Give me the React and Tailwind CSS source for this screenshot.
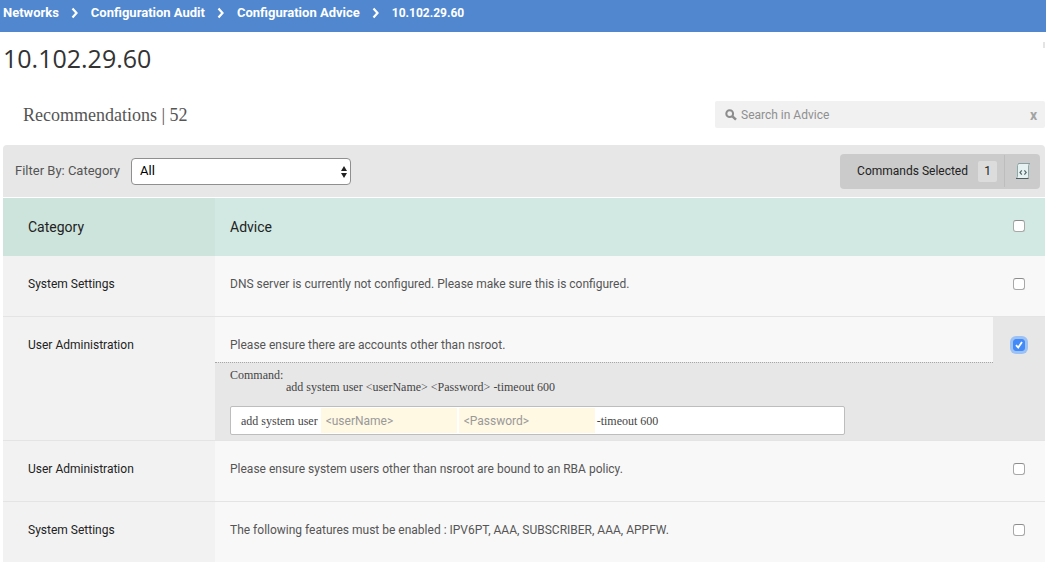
import { useState } from "react";
import clsx from "clsx";

const crumbs = ["Networks", "Configuration Audit", "Configuration Advice"];

const adviceRows = [
	{
		id: 1,
		category: "System Settings",
		advice:
			"DNS server is currently not configured. Please make sure this is configured.",
	},
	{
		id: 2,
		category: "User Administration",
		advice: "Please ensure there are accounts other than nsroot.",
		command: {
			prefix: "add system user",
			params: ["<userName>", "<Password>"],
			suffix: "-timeout 600",
		},
	},
	{
		id: 3,
		category: "User Administration",
		advice:
			"Please ensure system users other than nsroot are bound to an RBA policy.",
	},
	{
		id: 4,
		category: "System Settings",
		advice:
			"The following features must be enabled : IPV6PT, AAA, SUBSCRIBER, AAA, APPFW.",
	},
];

function Chevron() {
	return (
		<svg
			viewBox="0 0 8 12"
			className="mx-3 h-3 w-2"
			fill="none"
			stroke="currentColor"
			strokeWidth="2.2"
			aria-hidden="true"
		>
			<path d="M1.5 1.5 5.5 6 1.5 10.5" />
		</svg>
	);
}

function SearchIcon() {
	return (
		<svg
			viewBox="0 0 12 12"
			className="h-3 w-3 shrink-0 text-[#8c8c8c]"
			fill="none"
			stroke="currentColor"
			aria-hidden="true"
		>
			<circle cx="4.7" cy="4.7" r="3.4" strokeWidth="2" />
			<path d="M7.4 7.4 11 10.6" strokeWidth="2.6" />
		</svg>
	);
}

function ScriptIcon() {
	return (
		<svg viewBox="0 0 16 18" className="h-[18px] w-4" aria-hidden="true">
			<path
				d="M3.5 1.5H14.5L13.5 3.5V14.5L13 16.5H1.5L2.5 14.5V3.5Z"
				fill="#e6f1f1"
				stroke="#8fa9a9"
			/>
			<path d="M3.5 1.5H15" stroke="#8a9f9f" />
			<path d="M1 16.5H13.5" stroke="#4f5f5f" />
			<path
				d="M6.8 8.4 5 10.5 6.8 12.6M9.4 8.4 11.2 10.5 9.4 12.6"
				fill="none"
				stroke="#55696b"
				strokeWidth="1.2"
			/>
		</svg>
	);
}

function Checkbox({ label, checked, onChange }) {
	return (
		<span className="grid place-items-center">
			<input
				type="checkbox"
				aria-label={label}
				checked={checked}
				onChange={onChange}
				className="col-start-1 row-start-1 h-3 w-3 appearance-none rounded-[3px] border border-[#a8a8a8] border-t-[#8c8c8c] bg-white checked:border-[#4389f8] checked:bg-[#4389f8] checked:ring-3 checked:ring-[#9cc2f5]"
			/>
			{checked && (
				<svg
					viewBox="0 0 12 12"
					className="pointer-events-none col-start-1 row-start-1 h-3 w-3"
					fill="none"
					stroke="white"
					strokeWidth="1.8"
					aria-hidden="true"
				>
					<path d="M3 6.2 5.2 8.6 9 3" />
				</svg>
			)}
		</span>
	);
}

function CommandPanel({ command }) {
	return (
		<div className="border-t border-dotted border-[#a6a6a6] bg-[#e7e7e7] pt-1.5 pr-4 pb-[5px] pl-[15px] font-['Liberation_Serif',serif] text-xs text-[#444]">
			<div className="leading-3">Command:</div>
			<div className="pl-14 leading-3">
				{command.prefix} {command.params.join(" ")} {command.suffix}
			</div>
			<div className="mt-[13px] flex h-[29px] max-w-[615px] items-center rounded-xs border border-[#bdbdbd] bg-white pl-2.5">
				<span className="mr-[3px]">{command.prefix}</span>
				{command.params.map((param) => (
					<input
						key={param}
						aria-label={param}
						placeholder={param}
						className="mr-0.5 h-[25px] w-[136px] min-w-0 bg-[#fff8e3] px-[5px] font-['Roboto',sans-serif] placeholder:text-[#999] focus:outline-none"
					/>
				))}
				<span>{command.suffix}</span>
			</div>
		</div>
	);
}

function App() {
	const [selected, setSelected] = useState([2]);
	const [category, setCategory] = useState("All");
	const [search, setSearch] = useState("");

	const toggle = (id) => {
		setSelected(
			selected.includes(id)
				? selected.filter((s) => s !== id)
				: [...selected, id],
		);
	};

	const allSelected = selected.length === adviceRows.length;

	const rows = adviceRows.filter(
		(row) =>
			(category === "All" || row.category === category) &&
			row.advice.toLowerCase().includes(search.toLowerCase()),
	);

	return (
		<div className="min-h-screen bg-white font-['Roboto',sans-serif] text-xs text-[#555]">
			<nav
				aria-label="Breadcrumb"
				className="flex h-8 items-center bg-[#5087cf] pb-1.5 pl-[3px] text-[13px] font-bold text-white"
			>
				{crumbs.map((crumb) => (
					<span key={crumb} className="flex items-center">
						<a href="#">{crumb}</a>
						<Chevron />
					</span>
				))}
				<span className="text-xs">10.102.29.60</span>
			</nav>

			<main className="pr-px pl-[3px]">
				<div className="flex justify-between">
					<h1 className="pt-2 font-['Open_Sans',sans-serif] text-[25px] leading-9 text-[#333]">
						10.102.29.60
					</h1>
					<span className="mt-2.5 h-1.5 w-0.5 bg-[#e4e4e4]" />
				</div>

				<div className="flex items-center justify-between pt-[25px] pb-[17px] pl-5">
					<h2 className="font-['Liberation_Serif',serif] text-lg leading-6">
						Recommendations | 52
					</h2>
					<div className="flex h-[27px] w-[330px] items-center rounded-xs bg-[#f1f1f1] pr-2 pl-2.5">
						<SearchIcon />
						<input
							type="text"
							aria-label="Search in Advice"
							placeholder="Search in Advice"
							value={search}
							onChange={(e) => setSearch(e.target.value)}
							className="ml-1 min-w-0 flex-1 placeholder:text-[#8f8f8f] focus:outline-none"
						/>
						<button
							type="button"
							aria-label="Clear search"
							className="text-sm font-bold text-[#a3a3a3]"
							onClick={() => setSearch("")}
						>
							x
						</button>
					</div>
				</div>

				{/* Filter bar */}
				<div className="flex h-[52px] items-center justify-between rounded-t bg-[#e7e7e7] pr-[5px] pl-3">
					<div className="flex items-center gap-[11px]">
						<label htmlFor="category-filter" className="text-[13px]">
							Filter By: Category
						</label>
						<div className="relative">
							<select
								id="category-filter"
								value={category}
								onChange={(e) => setCategory(e.target.value)}
								className="h-[27px] w-[220px] appearance-none rounded border border-[#8f8f8f] bg-white px-2 text-[13px] text-black"
							>
								<option>All</option>
								<option>System Settings</option>
								<option>User Administration</option>
							</select>
							<svg
								viewBox="0 0 6 12"
								className="pointer-events-none absolute top-2 right-1 h-3 w-1.5"
								fill="#222"
								aria-hidden="true"
							>
								<path d="M3 0 6 5H0ZM3 12 0 7H6Z" />
							</svg>
						</div>
					</div>
					<div className="flex h-[35px] items-center rounded bg-[#cbcbcb] pl-[17px] text-[#222]">
						<span>Commands Selected</span>
						<span className="ml-2.5 flex h-[21px] w-[19px] items-center justify-center rounded-xs bg-[#dcdcdc]">
							{selected.length}
						</span>
						<button
							type="button"
							aria-label="View commands"
							className="ml-[7px] flex h-8 w-9 items-center justify-center border-l border-[#bdbdbd]"
						>
							<ScriptIcon />
						</button>
					</div>
				</div>

				<table className="mt-px w-full table-fixed border-separate border-spacing-0">
					<colgroup>
						<col className="w-[212px]" />
						<col />
						<col className="w-[52px]" />
					</colgroup>
					<thead>
						<tr className="h-[58px] bg-[#d1e9e2] text-left text-sm text-[#222]">
							<th className="bg-[#cde4dd] pl-[25px] font-normal">Category</th>
							<th className="pl-[15px] font-normal">Advice</th>
							<th className="pb-0.5">
								<Checkbox
									label="Select all"
									checked={allSelected}
									onChange={() =>
										setSelected(allSelected ? [] : adviceRows.map((r) => r.id))
									}
								/>
							</th>
						</tr>
					</thead>
					<tbody>
						{rows.map((row) => {
							const isSelected = selected.includes(row.id);
							const expanded = isSelected && row.command;
							return (
								<tr key={row.id} className="h-[61px] bg-[#f8f8f8] align-top">
									<td className="border-b border-[#e4e4e4] bg-[#f2f2f2] pt-5 pl-[25px] text-[#222]">
										{row.category}
									</td>
									<td className="border-b border-[#e4e4e4]">
										<div
											className={clsx("pt-5 pl-[15px]", expanded && "pb-[9px]")}
										>
											{row.advice}
										</div>
										{expanded && <CommandPanel command={row.command} />}
									</td>
									<td
										className={clsx(
											"border-b border-[#e4e4e4] pt-[22px]",
											isSelected && "bg-[#e7e7e7]",
										)}
									>
										<Checkbox
											label={`Select: ${row.advice}`}
											checked={isSelected}
											onChange={() => toggle(row.id)}
										/>
									</td>
								</tr>
							);
						})}
					</tbody>
				</table>
			</main>
		</div>
	);
}

export default App;
